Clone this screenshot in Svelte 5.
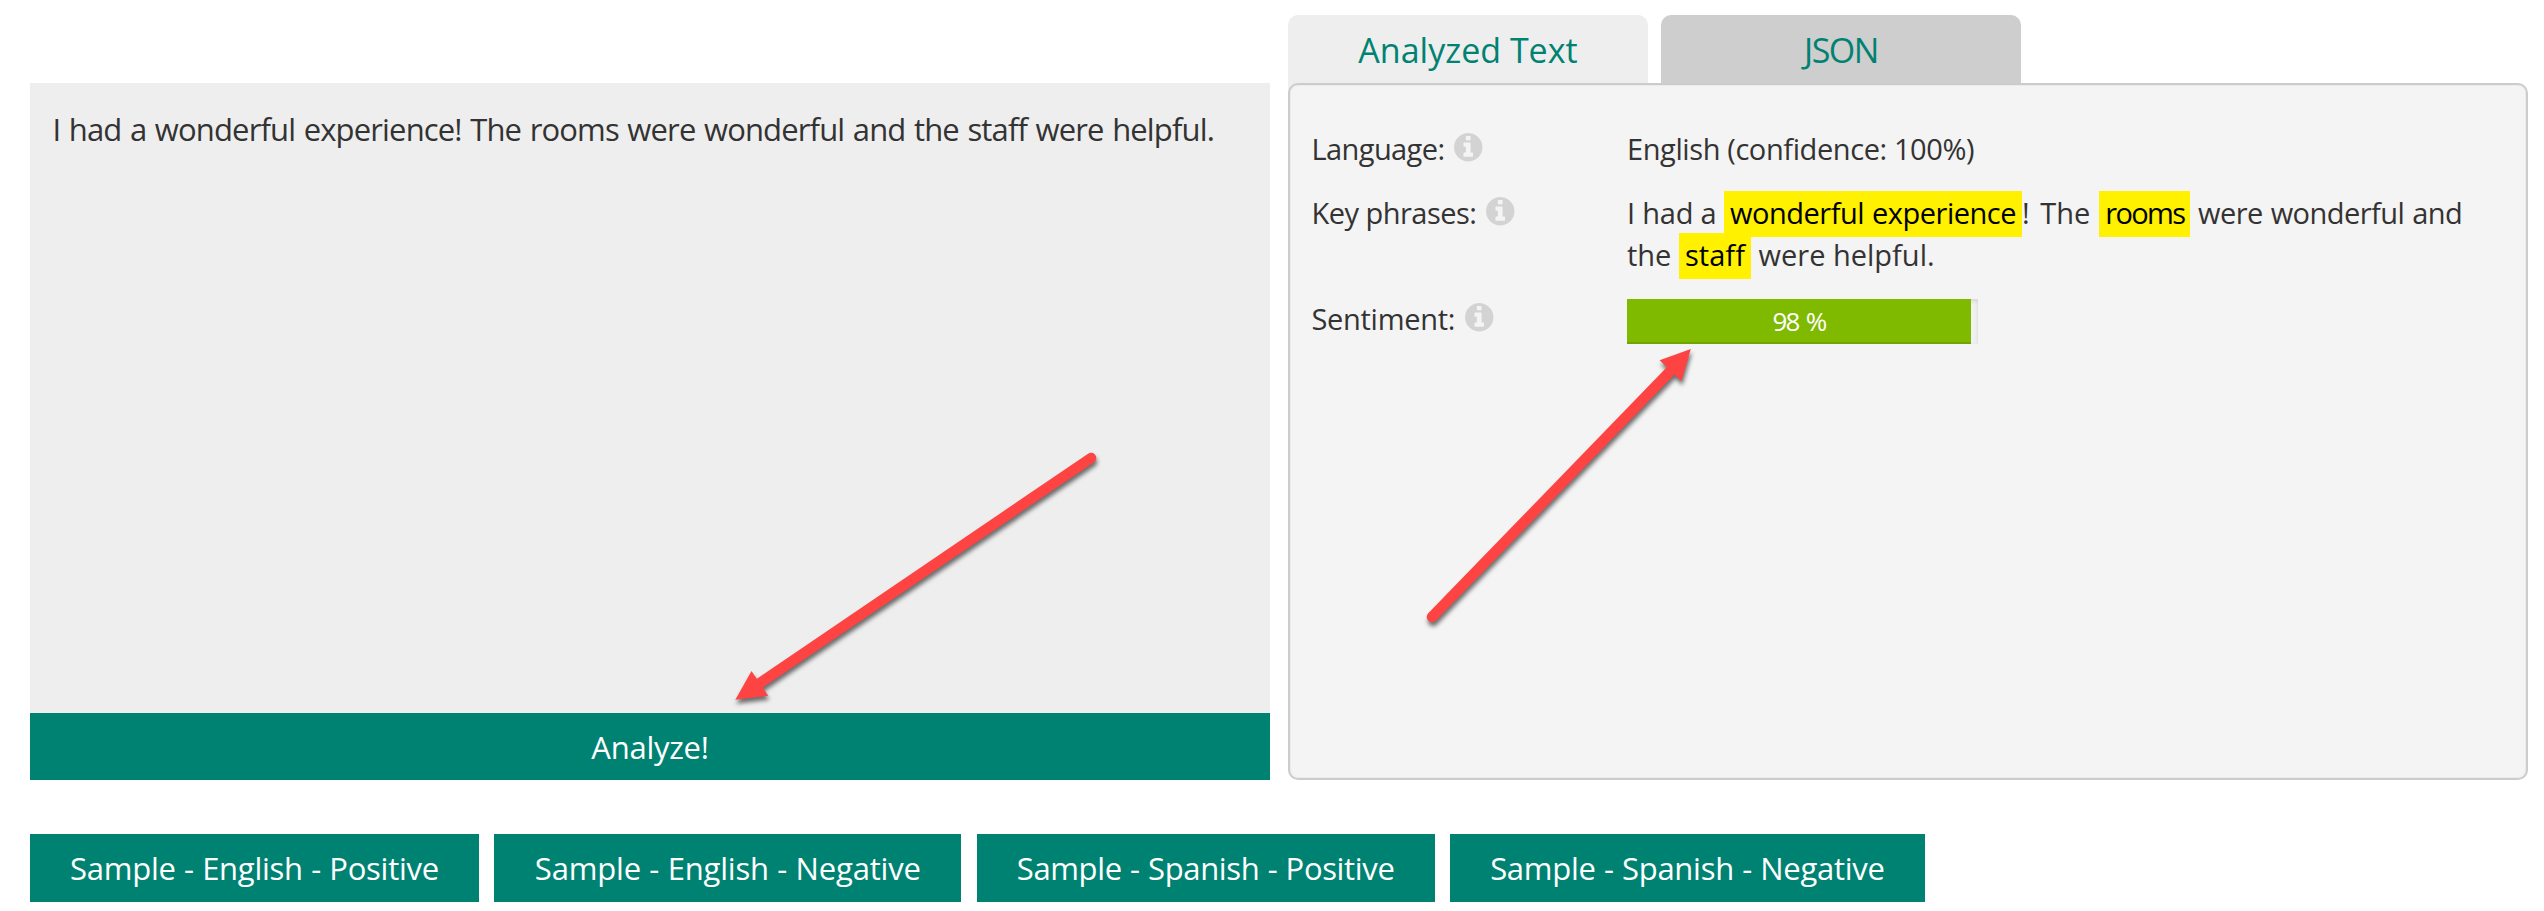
<script>
  const samples = [
    { label: 'Sample - English - Positive', width: 449, spacing: -0.26 },
    { label: 'Sample - English - Negative', width: 467, spacing: -0.18 },
    { label: 'Sample - Spanish - Positive', width: 458, spacing: -0.35 },
    { label: 'Sample - Spanish - Negative', width: 475, spacing: -0.28 }
  ];
  const score = 98;
</script>

{#snippet info()}
  <svg class="info" viewBox="128 128 1536 1536" aria-hidden="true">
    <path d="M1152 1376v-160q0-14-9-23t-23-9h-96v-512q0-14-9-23t-23-9h-320q-14 0-23 9t-9 23v160q0 14 9 23t23 9h96v320h-96q-14 0-23 9t-9 23v160q0 14 9 23t23 9h448q14 0 23-9t9-23zm-128-896v-160q0-14-9-23t-23-9h-192q-14 0-23 9t-9 23v160q0 14 9 23t23 9h192q14 0 23-9t9-23zm640 416q0 209-103 385.5t-279.5 279.5-385.5 103-385.5-103-279.5-279.5-103-385.5 103-385.5 279.5-279.5 385.5-103 385.5 103 279.5 279.5 103 385.5z" />
  </svg>
{/snippet}

<main>
  <div class="columns">
    <section class="input">
      <div class="source">I had a wonderful experience! The rooms were wonderful and the staff were helpful.</div>
      <button class="analyze">Analyze!</button>
    </section>

    <section class="output">
      <nav class="tabs">
        <button class="tab active">Analyzed Text</button>
        <button class="tab json">JSON</button>
      </nav>
      <div class="panel">
        <div class="row">
          <div class="key language">Language:{@render info()}</div>
          <div class="value confidence">English (confidence: 100%)</div>
        </div>
        <div class="row">
          <div class="key phrases">Key phrases:{@render info()}</div>
          <div class="value">
            <span class="lead">I had a</span> <mark class="wide">wonderful experience</mark><span class="next">! The</span> <mark class="rooms">rooms</mark> <span class="were">were wonderful and</span>
            <br />the <mark class="staff">staff</mark> were helpful.
          </div>
        </div>
        <div class="row">
          <div class="key sentiment">Sentiment:{@render info()}</div>
          <div class="value">
            <div class="track"><div class="bar" style="width: {score}%">{score} %</div></div>
          </div>
        </div>
      </div>
    </section>
  </div>

  <div class="samples">
    {#each samples as sample}
      <button style="width: {sample.width}px; letter-spacing: {sample.spacing}px">{sample.label}</button>
    {/each}
  </div>

  <svg class="arrows" viewBox="0 0 2544 911" aria-hidden="true">
    <g class="arrow">
      <path class="shaft" d="M1091 458 758 684.3" />
      <path d="M735.3 699.8 751.5 671 768.2 695.8z" />
    </g>
    <g class="arrow">
      <path class="shaft" d="M1432 617 1671.5 370" />
      <path d="M1690.8 349 1659.6 360.3 1681.4 381.2z" />
    </g>
  </svg>
</main>

<style>
  :global(body) {
    background: #fff;
  }

  main {
    position: relative;
    box-sizing: border-box;
    width: 2544px;
    height: 911px;
    padding: 15px 16px 0 30px;
    overflow: hidden;
    color: #333;
    font-family: 'Open Sans', 'Noto Sans', sans-serif;
  }

  button {
    margin: 0;
    padding: 0;
    border: 0;
    font: inherit;
    white-space: nowrap;
  }

  .columns {
    display: flex;
    gap: 18px;
    height: 765px;
  }

  .input {
    display: flex;
    flex-direction: column;
    width: 1240px;
    padding-top: 68px;
    font-size: 31px;
  }

  .source {
    flex: 1;
    padding: 25px 0 0 22.5px;
    background: #eee;
    line-height: 42px;
    letter-spacing: -0.85px;
    word-spacing: 1.3px;
    white-space: nowrap;
  }

  .analyze {
    height: 67px;
    background: #008272;
    color: #fff;
    letter-spacing: -0.25px;
  }

  .output {
    display: flex;
    flex-direction: column;
    width: 1240px;
  }

  .tabs {
    display: flex;
    gap: 13px;
    height: 68px;
  }

  .tab {
    width: 360px;
    padding-top: 2px;
    border-radius: 10px 10px 0 0;
    background: #cecece;
    color: #008272;
    font-size: 34px;
  }

  .tab.active {
    height: 78px;
    padding-bottom: 10px;
    background: #eee;
  }

  .tab.json {
    font-weight: 500;
    letter-spacing: -1.5px;
  }

  .panel {
    position: relative;
    display: flex;
    flex: 1;
    flex-direction: column;
    box-sizing: border-box;
    gap: 22px;
    padding: 43px 0 0 21.5px;
    border: 2px solid #ccc;
    border-radius: 10px;
    background: #f4f4f4;
    box-shadow: inset 0 0 0 1px #ebebeb;
    font-size: 29px;
    line-height: 42px;
  }

  .row {
    display: flex;
  }

  .key {
    display: flex;
    width: 315.5px;
  }

  .language {
    letter-spacing: -0.6px;
  }

  .phrases {
    letter-spacing: -0.52px;
  }

  .sentiment {
    letter-spacing: -0.3px;
  }

  .confidence {
    letter-spacing: -0.4px;
  }

  .info {
    width: 28.5px;
    height: 28.5px;
    margin: 5px 0 0 10px;
    fill: #d3d3d3;
  }

  .value {
    width: 860px;
    white-space: nowrap;
  }

  mark {
    padding: 2px 6px 5px;
    background: #fff100;
    color: #000;
  }

  .lead {
    letter-spacing: -0.2px;
  }

  .wide {
    letter-spacing: -0.5px;
    word-spacing: 1px;
  }

  .next {
    word-spacing: 3px;
  }

  .rooms {
    margin-left: 1.5px;
    letter-spacing: -1.65px;
  }

  .were {
    letter-spacing: -0.55px;
    word-spacing: 1px;
  }

  .staff {
    letter-spacing: 0.05px;
  }

  .track {
    width: 351px;
    height: 45px;
    margin-top: 1px;
    background: #f1f1f1;
    box-shadow: inset 0 2px 4px rgba(0, 0, 0, 0.12);
  }

  .bar {
    height: 45px;
    background: #7fba00;
    box-shadow: inset 0 -2px 0 #70a400;
    color: #fff;
    font-size: 26px;
    font-weight: 500;
    line-height: 44px;
    letter-spacing: -1.9px;
    word-spacing: 2.5px;
    text-align: center;
  }

  .samples {
    display: flex;
    gap: 15.3px;
    height: 68px;
    margin-top: 54px;
    font-size: 31px;
  }

  .samples button {
    background: #008272;
    color: #fff;
    word-spacing: 0.6px;
  }

  .arrows {
    position: absolute;
    inset: 0;
    width: 2544px;
    height: 911px;
    pointer-events: none;
  }

  .arrow {
    fill: #fe4343;
    filter: drop-shadow(1px 4px 2px rgba(0, 0, 0, 0.55));
  }

  .shaft {
    fill: none;
    stroke: #fe4343;
    stroke-width: 10.5;
    stroke-linecap: round;
  }
</style>
